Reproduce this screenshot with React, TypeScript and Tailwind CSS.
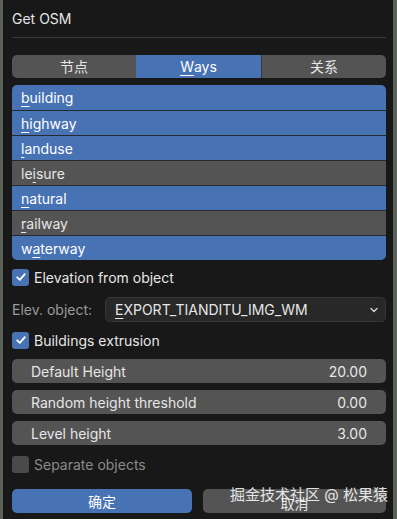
import React from "react";

const font = { fontFamily: "Inter, 'Noto Sans CJK SC', sans-serif" };

function U({ pre, u, post }: { pre?: string; u: string; post: string }) {
  return (
    <>
      {pre}
      <span className="underline underline-offset-[3px] decoration-1">{u}</span>
      {post}
    </>
  );
}

function Check({ on = true }: { on?: boolean }) {
  return (
    <div
      className={`w-[17px] h-[17px] rounded-[3px] flex items-center justify-center ${
        on ? "bg-[#4772b3]" : "bg-[#4a4a4a]"
      }`}
    >
      {on && (
        <svg width="12" height="12" viewBox="0 0 12 12" fill="none">
          <path d="M2.2 6.3 L4.8 8.8 L9.8 3.2" stroke="white" strokeWidth="1.8" strokeLinecap="round" strokeLinejoin="round" />
        </svg>
      )}
    </div>
  );
}

function Field({ label, value }: { label: string; value: string }) {
  return (
    <div className="h-6 rounded-[5px] bg-[#545454] flex items-center justify-between pl-[19px] pr-[19px] text-[14px] text-[#e6e6e6]">
      <span>{label}</span>
      <span>{value}</span>
    </div>
  );
}

const rows: { pre?: string; u: string; post: string; on: boolean }[] = [
  { u: "b", post: "uilding", on: true },
  { u: "h", post: "ighway", on: true },
  { u: "l", post: "anduse", on: true },
  { pre: "le", u: "i", post: "sure", on: false },
  { u: "n", post: "atural", on: true },
  { u: "r", post: "ailway", on: false },
  { pre: "w", u: "a", post: "terway", on: true },
];

export default function App() {
  return (
    <div className="w-[397px] h-[519px] bg-[#5b6258] flex overflow-hidden" style={font}>
      <div className="ml-[3px] w-[390px] h-full bg-[#181818] pl-[9px] pr-[7px] flex flex-col text-[#e6e6e6]">
        {/* title */}
        <div className="h-[37px] flex items-center text-[14px]">Get OSM</div>
        <div className="h-px bg-[#3a3a3a]" />

        {/* tabs */}
        <div className="mt-[17px] h-[23px] flex rounded-[5px] overflow-hidden text-[14px]">
          <div className="flex-1 bg-[#545454] flex items-center justify-center">节点</div>
          <div className="w-[125px] bg-[#4772b3] flex items-center justify-center text-white">
            <U u="W" post="ays" />
          </div>
          <div className="flex-1 bg-[#545454] flex items-center justify-center border-l border-[#3a3a3a]">关系</div>
        </div>

        {/* list */}
        <div className="mt-[7px] rounded-[5px] overflow-hidden flex flex-col">
          {rows.map((r, i) => (
            <div
              key={i}
              className={`h-[25px] flex items-center pl-[9px] text-[14px] ${
                i > 0 ? "border-t border-[#262a30]" : ""
              } ${r.on ? "bg-[#4772b3] text-white" : "bg-[#545454] text-[#e6e6e6]"}`}
            >
              <U pre={r.pre} u={r.u} post={r.post} />
            </div>
          ))}
        </div>

        {/* elevation */}
        <div className="mt-[5px] h-[24px] flex items-center gap-[5px] text-[14px]">
          <Check />
          <span>Elevation from object</span>
        </div>
        <div className="mt-[8px] h-[25px] flex items-center text-[14px]">
          <span className="w-[93px] text-[#9a9a9a]">Elev. object:</span>
          <div className="flex-1 h-full rounded-[5px] bg-[#282828] border border-[#363636] flex items-center justify-between pl-[9px] pr-[6px] text-[#e6e6e6]">
            <span>
              <U u="E" post="XPORT_TIANDITU_IMG_WM" />
            </span>
            <svg width="10" height="10" viewBox="0 0 10 10" fill="none">
              <path d="M2 3.5 L5 6.5 L8 3.5" stroke="#d0d0d0" strokeWidth="1.4" strokeLinecap="round" strokeLinejoin="round" />
            </svg>
          </div>
        </div>
        <div className="mt-[6px] h-[24px] flex items-center gap-[5px] text-[14px]">
          <Check />
          <span>Buildings extrusion</span>
        </div>

        {/* fields */}
        <div className="mt-[7px] flex flex-col gap-[7px]">
          <Field label="Default Height" value="20.00" />
          <Field label="Random height threshold" value="0.00" />
          <Field label="Level height" value="3.00" />
        </div>

        <div className="mt-[7px] h-[24px] flex items-center gap-[5px] text-[14px]">
          <Check on={false} />
          <span className="text-[#8a8a8a]">Separate objects</span>
        </div>

        {/* buttons */}
        <div className="mt-[13px] h-6 flex gap-[11px] text-[14px]">
          <div className="w-[180px] rounded-[5px] bg-[#4772b3] flex items-center justify-center text-white">确定</div>
          <div className="relative flex-1 rounded-[5px] bg-[#545454] flex items-center justify-center pt-[4px]">
            <span>取消</span>
            <span className="absolute left-[27px] top-[-5px] text-[15px] text-white/85 whitespace-nowrap">
              掘金技术社区 @ 松果猿
            </span>
          </div>
        </div>
      </div>
    </div>
  );
}
